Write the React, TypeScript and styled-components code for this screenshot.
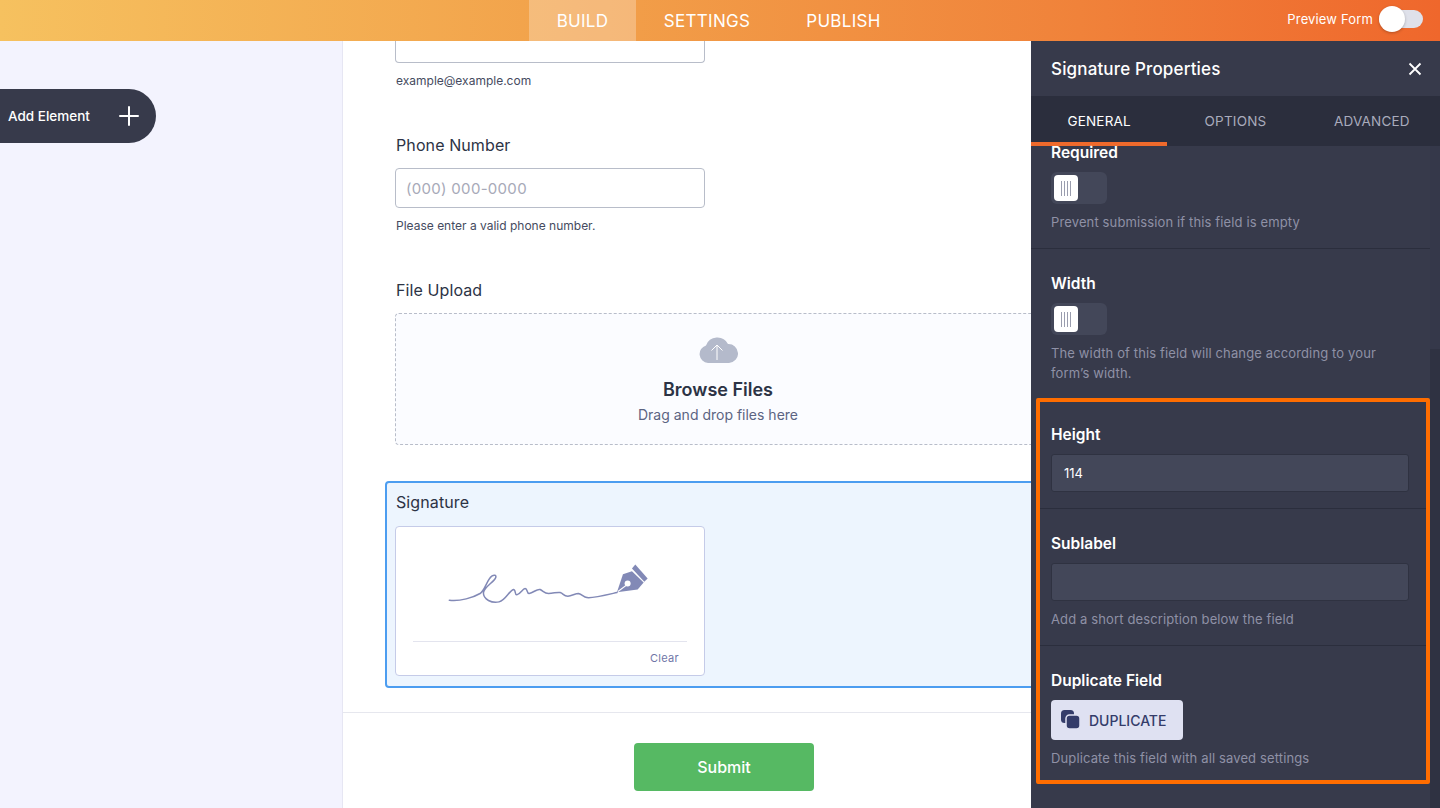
import React from "react";
import styled, { createGlobalStyle } from "styled-components";

const Global = createGlobalStyle`
  html, body { margin: 0; padding: 0; height: 100%; overflow: hidden; }
  * { box-sizing: border-box; }
  body { font-family: "Inter", "Liberation Sans", sans-serif; }
`;

const panelFont = `"Inter", "Noto Sans", sans-serif`;

const Page = styled.div`
  width: 1440px;
  height: 808px;
  display: flex;
  flex-direction: column;
  overflow: hidden;
`;

const TopBar = styled.header`
  height: 41px;
  flex: none;
  position: relative;
  display: flex;
  justify-content: center;
  background: linear-gradient(90deg, #f6c15f 0%, #f2a14a 40%, #f0823a 75%, #ef672c 100%);
`;

const NavTabs = styled.nav`
  display: flex;
  margin-left: -2px;
`;

const NavTab = styled.div<{ $active?: boolean; $w: number }>`
  width: ${(p) => p.$w}px;
  display: flex;
  align-items: center;
  justify-content: center;
  color: #fff;
  font-family: ${panelFont};
  font-size: 17px;
  letter-spacing: 0.3px;
  background: ${(p) => (p.$active ? "rgba(255,255,255,0.27)" : "transparent")};
`;

const Preview = styled.div`
  position: absolute;
  right: 17px;
  top: 6px;
  height: 26px;
  display: flex;
  align-items: center;
  gap: 6px;
  color: #fff;
  font-family: ${panelFont};
  font-size: 13px;
  letter-spacing: 0.15px;
`;

const PreviewTrack = styled.div`
  width: 44px;
  height: 18px;
  border-radius: 9px;
  background: #dfe1ea;
  position: relative;
`;

const PreviewKnob = styled.div`
  position: absolute;
  left: 0;
  top: -4px;
  width: 26px;
  height: 26px;
  border-radius: 50%;
  background: #fff;
  box-shadow: 0 1px 3px rgba(0, 0, 0, 0.25);
`;

const Body = styled.div`
  flex: 1;
  display: flex;
  min-height: 0;
`;

const Sidebar = styled.aside`
  width: 343px;
  flex: none;
  background: #f3f3fe;
  border-right: 1px solid #e6e6f3;
  padding-top: 48px;
`;

const AddElement = styled.div`
  width: 156px;
  height: 54px;
  border-radius: 0 27px 27px 0;
  background: #373a4b;
  color: #fff;
  font-family: ${panelFont};
  font-weight: 500;
  font-size: 13.5px;
  display: flex;
  align-items: center;
  justify-content: space-between;
  padding: 0 17px 0 8px;
`;

const Canvas = styled.main`
  width: 688px;
  flex: none;
  background: #fff;
  overflow: hidden;
`;

const Plain = styled.section<{ $h: number }>`
  height: ${(p) => p.$h}px;
  padding: 0 0 0 52px;
`;

const Label = styled.div`
  font-size: 16px;
  letter-spacing: 0.1px;
  line-height: 20px;
  color: #2c3345;
  margin-left: 1px;
  margin-bottom: 13px;
`;

const TextBox = styled.div<{ $clipped?: boolean }>`
  width: 310px;
  height: ${(p) => (p.$clipped ? "22px" : "40px")};
  background: #fff;
  border: 1px solid #b8bdc9;
  border-top: ${(p) => (p.$clipped ? "none" : "1px solid #b8bdc9")};
  border-radius: ${(p) => (p.$clipped ? "0 0 4px 4px" : "4px")};
  color: #a7a9b8;
  font-size: 15px;
  letter-spacing: 0.3px;
  line-height: 39px;
  padding-left: 10px;
`;

const Help = styled.div`
  font-size: 12px;
  line-height: 16px;
  color: #454b60;
  margin: 10px 0 0 1px;
`;

const Upload = styled.div`
  width: 646px;
  height: 132px;
  background: #fbfcff;
  border: 1px dashed #b8bdc9;
  border-radius: 4px;
  display: flex;
  flex-direction: column;
  align-items: center;
  padding-top: 23px;
`;

const UploadTitle = styled.div`
  font-size: 18px;
  font-weight: 600;
  line-height: 22px;
  color: #2c3345;
  margin-top: 16px;
`;

const UploadHint = styled.div`
  font-size: 14px;
  line-height: 18px;
  color: #5c6482;
  margin-top: 5px;
`;

const Selected = styled.section`
  width: 701px;
  height: 207px;
  margin-left: 42px;
  padding: 9px 0 0 8px;
  background: #edf5fe;
  border: 2px solid #4c9df0;
  border-radius: 4px;
`;

const SelectedLabel = styled(Label)`
  margin-bottom: 14px;
`;

const SigBox = styled.div`
  width: 310px;
  height: 150px;
  background: #fff;
  border: 1px solid #c5cbe8;
  border-radius: 4px;
  padding: 33px 17px 0;
`;

const SigDraw = styled.div`
  height: 82px;
  padding-left: 32px;
  border-bottom: 1px solid #e3e4ee;
`;

const Clear = styled.div`
  text-align: right;
  font-size: 11px;
  line-height: 14px;
  letter-spacing: 0.3px;
  color: #6f76a7;
  margin: 9px 8px 0 0;
`;

const SubmitRow = styled.div`
  margin-top: 24px;
  border-top: 1px solid #e6e7ee;
  padding: 30px 0 0 291px;
`;

const Submit = styled.div`
  width: 180px;
  height: 48px;
  border-radius: 4px;
  background: #56b963;
  color: #fff;
  font-size: 16px;
  font-weight: 500;
  display: flex;
  align-items: center;
  justify-content: center;
`;

const Panel = styled.aside`
  flex: 1;
  background: #373a4b;
  display: flex;
  flex-direction: column;
  font-family: ${panelFont};
  min-width: 0;
`;

const PanelHead = styled.div`
  height: 55px;
  flex: none;
  display: flex;
  align-items: center;
  justify-content: space-between;
  padding: 0 18px 0 20px;
  color: #fff;
  font-size: 17px;
  letter-spacing: 0.15px;
  font-weight: 500;
`;

const PanelTabs = styled.div`
  height: 50px;
  flex: none;
  display: grid;
  grid-template-columns: repeat(3, 1fr);
  background: #2b2e3d;
`;

const PanelTab = styled.div<{ $active?: boolean }>`
  display: flex;
  align-items: center;
  justify-content: center;
  font-size: 13.5px;
  letter-spacing: 0.2px;
  color: ${(p) => (p.$active ? "#fff" : "#a9abbc")};
  border-bottom: 4px solid ${(p) => (p.$active ? "#ef6a2c" : "transparent")};
  padding-top: 4px;
`;

const Scroller = styled.div`
  flex: 1;
  display: flex;
  min-height: 0;
`;

const ScrollContent = styled.div`
  width: 399px;
  flex: none;
`;

const Track = styled.div`
  flex: 1;
  display: flex;
  flex-direction: column;
  background: #2f3242;
`;

const Thumb = styled.div`
  height: 203px;
  background: #35384a;
`;

const Block = styled.div<{ $h: number; $line?: boolean }>`
  display: flow-root;
  height: ${(p) => p.$h}px;
  padding: 0 20px;
  border-bottom: ${(p) => (p.$line ? "1px solid #2b2e3d" : "none")};
`;

const PropLabel = styled.div`
  color: #fff;
  font-size: 15.5px;
  font-weight: 600;
  line-height: 20px;
`;

const ClippedLabel = styled(PropLabel)`
  margin-top: -3px;
`;

const WidthLabel = styled(PropLabel)`
  padding-top: 25px;
  height: 45px;
`;

const PropDesc = styled.div`
  color: #8f91a6;
  font-size: 13px;
  letter-spacing: 0.13px;
  line-height: 20px;
`;

const SublabelDesc = styled(PropDesc)`
  margin-top: 8px;
`;

const Toggle = styled.div`
  width: 56px;
  height: 32px;
  background: #434759;
  border-radius: 6px;
  padding: 3px;
  margin: 9px 0 8px;
`;

const ToggleKnob = styled.div`
  width: 24px;
  height: 26px;
  background: #fff;
  border-radius: 4px;
  display: flex;
  align-items: center;
  justify-content: center;
  gap: 2px;
`;

const Tick = styled.span`
  width: 1px;
  height: 15px;
  background: #9a9dae;
`;

const Highlight = styled.div`
  width: 394px;
  height: 386px;
  margin-left: 5px;
  border: 4px solid #ff6d00;
  border-radius: 2px;
`;

const HlBlock = styled.div<{ $h: number; $line?: boolean; $top: number }>`
  height: ${(p) => p.$h}px;
  padding: ${(p) => p.$top}px 17px 0 11px;
  border-bottom: ${(p) => (p.$line ? "1px solid #2b2e3d" : "none")};
`;

const PropInput = styled.div`
  width: 358px;
  height: 38px;
  margin-top: 9px;
  background: #434759;
  border: 1px solid #2f3241;
  border-radius: 3px;
  color: #fff;
  font-size: 13px;
  line-height: 36px;
  padding-left: 12px;
`;

const DupButton = styled.div`
  width: 132px;
  height: 40px;
  margin: 9px 0 8px;
  background: #dfe1f2;
  border-radius: 4px;
  display: flex;
  align-items: center;
  gap: 8px;
  padding-left: 10px;
  color: #343c6a;
  font-size: 14px;
  font-weight: 500;
`;

const ToggleCtl = () => (
  <Toggle>
    <ToggleKnob>
      <Tick />
      <Tick />
      <Tick />
      <Tick />
    </ToggleKnob>
  </Toggle>
);

export default function App() {
  return (
    <Page>
      <Global />
      <TopBar>
        <NavTabs>
          <NavTab $active $w={107}>BUILD</NavTab>
          <NavTab $w={142}>SETTINGS</NavTab>
          <NavTab $w={131}>PUBLISH</NavTab>
        </NavTabs>
        <Preview>
          Preview Form
          <PreviewTrack>
            <PreviewKnob />
          </PreviewTrack>
        </Preview>
      </TopBar>
      <Body>
        <Sidebar>
          <AddElement>
            Add Element
            <svg width="20" height="20" viewBox="0 0 20 20">
              <path d="M10 1v18M1 10h18" stroke="#fff" strokeWidth="2" strokeLinecap="round" />
            </svg>
          </AddElement>
        </Sidebar>
        <Canvas>
          <Plain $h={94}>
            <TextBox $clipped />
            <Help>example@example.com</Help>
          </Plain>
          <Plain $h={145}>
            <Label>Phone Number</Label>
            <TextBox>(000) 000-0000</TextBox>
            <Help>Please enter a valid phone number.</Help>
          </Plain>
          <Plain $h={201}>
            <Label>File Upload</Label>
            <Upload>
              <svg width="40" height="26" viewBox="0 0 40 26">
                <path
                  d="M10 26a9 9 0 0 1-2-17.6A12 12 0 0 1 30 7a9.5 9.5 0 0 1 1 19z"
                  fill="#b4bacb"
                />
                <path d="M19 23V8M13.5 13.5 19 8l5.5 5.5" stroke="#fff" strokeWidth="1" fill="none" />
              </svg>
              <UploadTitle>Browse Files</UploadTitle>
              <UploadHint>Drag and drop files here</UploadHint>
            </Upload>
          </Plain>
          <Selected>
            <SelectedLabel>Signature</SelectedLabel>
            <SigBox>
              <SigDraw>
                <svg width="207" height="47" viewBox="180 240 620 140">
                  <path
                    d="M193 360C225 364 265 352 285 340C300 330 305 300 320 288C328 283 334 285 332 292C328 305 297 320 295 338C295 358 320 370 342 365C362 360 372 332 385 328C393 328 388 345 395 344C408 340 412 326 420 325C428 325 424 340 432 340C445 338 455 325 465 328C475 333 478 340 490 340C505 340 515 335 525 337C535 340 535 348 548 348C560 347 570 340 580 340C590 342 595 350 605 352C620 355 660 345 695 337"
                    fill="none"
                    stroke="#8289b6"
                    strokeWidth="4.5"
                    strokeLinecap="round"
                  />
                  <path d="M695 336 713 282 740 273 775 307 757 328Z" fill="#8289b6" />
                  <path d="M750 253 787 295 777 305 740 265Z" fill="#8289b6" />
                  <circle cx="727" cy="310" r="9" fill="#fff" />
                  <path d="M698 334 722 316" stroke="#fff" strokeWidth="3" />
                </svg>
              </SigDraw>
              <Clear>Clear</Clear>
            </SigBox>
          </Selected>
          <SubmitRow>
            <Submit>Submit</Submit>
          </SubmitRow>
        </Canvas>
        <Panel>
          <PanelHead>
            Signature Properties
            <svg width="14" height="14" viewBox="0 0 14 14">
              <path d="M1.5 1.5l11 11M12.5 1.5l-11 11" stroke="#fff" strokeWidth="1.8" />
            </svg>
          </PanelHead>
          <PanelTabs>
            <PanelTab $active>GENERAL</PanelTab>
            <PanelTab>OPTIONS</PanelTab>
            <PanelTab>ADVANCED</PanelTab>
          </PanelTabs>
          <Scroller>
            <ScrollContent>
              <Block $h={103} $line>
                <ClippedLabel>Required</ClippedLabel>
                <ToggleCtl />
                <PropDesc>Prevent submission if this field is empty</PropDesc>
              </Block>
              <Block $h={149}>
                <WidthLabel>Width</WidthLabel>
                <ToggleCtl />
                <PropDesc>
                  The width of this field will change according to your form’s width.
                </PropDesc>
              </Block>
              <Highlight>
                <HlBlock $h={107} $top={23} $line>
                  <PropLabel>Height</PropLabel>
                  <PropInput>114</PropInput>
                </HlBlock>
                <HlBlock $h={137} $top={25} $line>
                  <PropLabel>Sublabel</PropLabel>
                  <PropInput />
                  <SublabelDesc>Add a short description below the field</SublabelDesc>
                </HlBlock>
                <HlBlock $h={134} $top={25}>
                  <PropLabel>Duplicate Field</PropLabel>
                  <DupButton>
                    <svg width="20" height="20" viewBox="0 0 20 20">
                      <rect x="0" y="0" width="13" height="13" rx="3.5" fill="#343c6a" />
                      <rect x="5" y="5" width="14" height="14" rx="3.5" fill="#343c6a" stroke="#dfe1f2" strokeWidth="1.5" />
                    </svg>
                    DUPLICATE
                  </DupButton>
                  <PropDesc>Duplicate this field with all saved settings</PropDesc>
                </HlBlock>
              </Highlight>
            </ScrollContent>
            <Track>
              <Thumb />
            </Track>
          </Scroller>
        </Panel>
      </Body>
    </Page>
  );
}
